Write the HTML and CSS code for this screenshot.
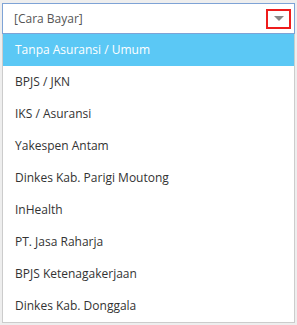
FILE: index.html
```html
<!DOCTYPE html>
<html lang="id">
<head>
    <meta charset="UTF-8">
    <meta name="viewport" content="width=device-width, initial-scale=1">
    <title>Cara Bayar</title>
    <link rel="stylesheet" href="styles.css">
</head>
<body>

<main class="pilih">
    <div class="kotak">
        <span class="teks">[Cara Bayar]</span>
        <span class="panah"><span class="segitiga"></span></span>
    </div>
    <ul class="daftar">
        <li class="aktif">Tanpa Asuransi / Umum</li>
        <li>BPJS / JKN</li>
        <li>IKS / Asuransi</li>
        <li>Yakespen Antam</li>
        <li>Dinkes Kab. Parigi Moutong</li>
        <li>InHealth</li>
        <li>PT. Jasa Raharja</li>
        <li>BPJS Ketenagakerjaan</li>
        <li>Dinkes Kab. Donggala</li>
    </ul>
</main>

</body>
</html>
```

FILE: styles.css
```css
body {
    margin: 0;
    background-color: #eeeeee;
    font-family: "Open Sans", sans-serif;
    font-size: 12px;
}
.pilih {
    padding: 3px 2px 0 2px;
}
.kotak {
    display: flex;
    align-items: center;
    justify-content: space-between;
    height: 29px;
    border: 1px solid #7ea3d6;
    background-color: white;
    padding: 0 2px 0 11px;
    color: #555;
}
.panah {
    display: flex;
    align-items: center;
    justify-content: center;
    width: 21px;
    height: 16px;
    border: 2px solid #ee1c1c;
    margin-right: 1px;
}
.segitiga {
    width: 0;
    height: 0;
    border-left: 5px solid transparent;
    border-right: 5px solid transparent;
    border-top: 5px solid #888;
}
.daftar {
    list-style: none;
    margin: 0;
    padding: 0;
    background-color: white;
    border: 1px solid #cccccc;
    border-top: none;
}
.daftar li {
    height: 32px;
    line-height: 32px;
    padding-left: 12px;
    color: #333;
}
.daftar li.aktif {
    background-color: #5bc8f5;
    color: white;
}
```
